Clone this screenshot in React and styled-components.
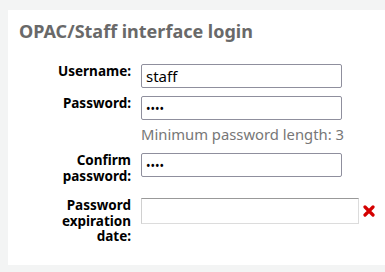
import React from "react";
import styled, { createGlobalStyle } from "styled-components";

const GlobalStyle = createGlobalStyle`
  html, body {
    margin: 0;
    padding: 0;
    background: #f3f4f4;
    font-family: "Noto Sans", "Open Sans", sans-serif;
  }
`;

const Page = styled.div`
  padding: 10px 0 8px 8px;
`;

const Panel = styled.div`
  background: #ffffff;
  padding: 9px 0 20px 11px;
`;

const Title = styled.h3`
  margin: 0 0 21px;
  font-size: 18px;
  font-weight: 700;
  color: #696969;
  line-height: 24px;
`;

const Rows = styled.ol`
  list-style: none;
  margin: 0;
  padding: 0;
  display: flex;
  flex-direction: column;
  gap: 8px;
`;

const Row = styled.li`
  display: grid;
  grid-template-columns: 112px auto;
  column-gap: 10px;
  align-items: start;
  margin-top: ${(p) => p.$space || 0}px;
`;

const Label = styled.label`
  text-align: right;
  font-size: 13.5px;
  font-weight: 700;
  line-height: 15.5px;
  color: #000;
`;

const Field = styled.div`
  display: flex;
  flex-direction: column;
`;

const Input = styled.input`
  box-sizing: border-box;
  width: ${(p) => p.$width || 201}px;
  height: 24px;
  margin: 0;
  padding: 0 4px;
  border: 1px solid #8f8f9d;
  border-radius: 2px;
  background: #fff;
  font-family: "Noto Sans", "Open Sans", sans-serif;
  font-size: ${(p) => (p.type === "password" ? 12 : 15)}px;
  color: #000;
  outline: none;
`;

const DateInput = styled(Input)`
  height: 26px;
  border-radius: 0;
  border-top-color: #999;
  border-left-color: #d0d0d0;
  border-right-color: #dcdcdc;
  border-bottom-color: #dcdcdc;
`;

const Hint = styled.div`
  margin: 5px 0 2px;
  font-size: 14.8px;
  line-height: 18px;
  color: #777;
`;

const DateWrap = styled.div`
  display: flex;
  align-items: center;
  gap: 4px;
`;

const ClearIcon = () => (
  <svg width="12" height="12" viewBox="0 0 12 12">
    <path d="M2 2 L10 10 M10 2 L2 10" stroke="#d40000" strokeWidth="3.2" strokeLinecap="round" />
  </svg>
);

export default function App() {
  return (
    <>
      <GlobalStyle />
      <Page>
        <Panel>
          <Title>OPAC/Staff interface login</Title>
          <Rows>
            <Row>
              <Label>Username:</Label>
              <Input defaultValue="staff" />
            </Row>
            <Row>
              <Label>Password:</Label>
              <Field>
                <Input type="password" defaultValue="1234" />
                <Hint>Minimum password length: 3</Hint>
              </Field>
            </Row>
            <Row>
              <Label>
                Confirm
                <br />
                password:
              </Label>
              <Input type="password" defaultValue="1234" />
            </Row>
            <Row $space={6}>
              <Label>
                Password
                <br />
                expiration
                <br />
                date:
              </Label>
              <DateWrap>
                <DateInput $width={218} />
                <ClearIcon />
              </DateWrap>
            </Row>
          </Rows>
        </Panel>
      </Page>
    </>
  );
}
